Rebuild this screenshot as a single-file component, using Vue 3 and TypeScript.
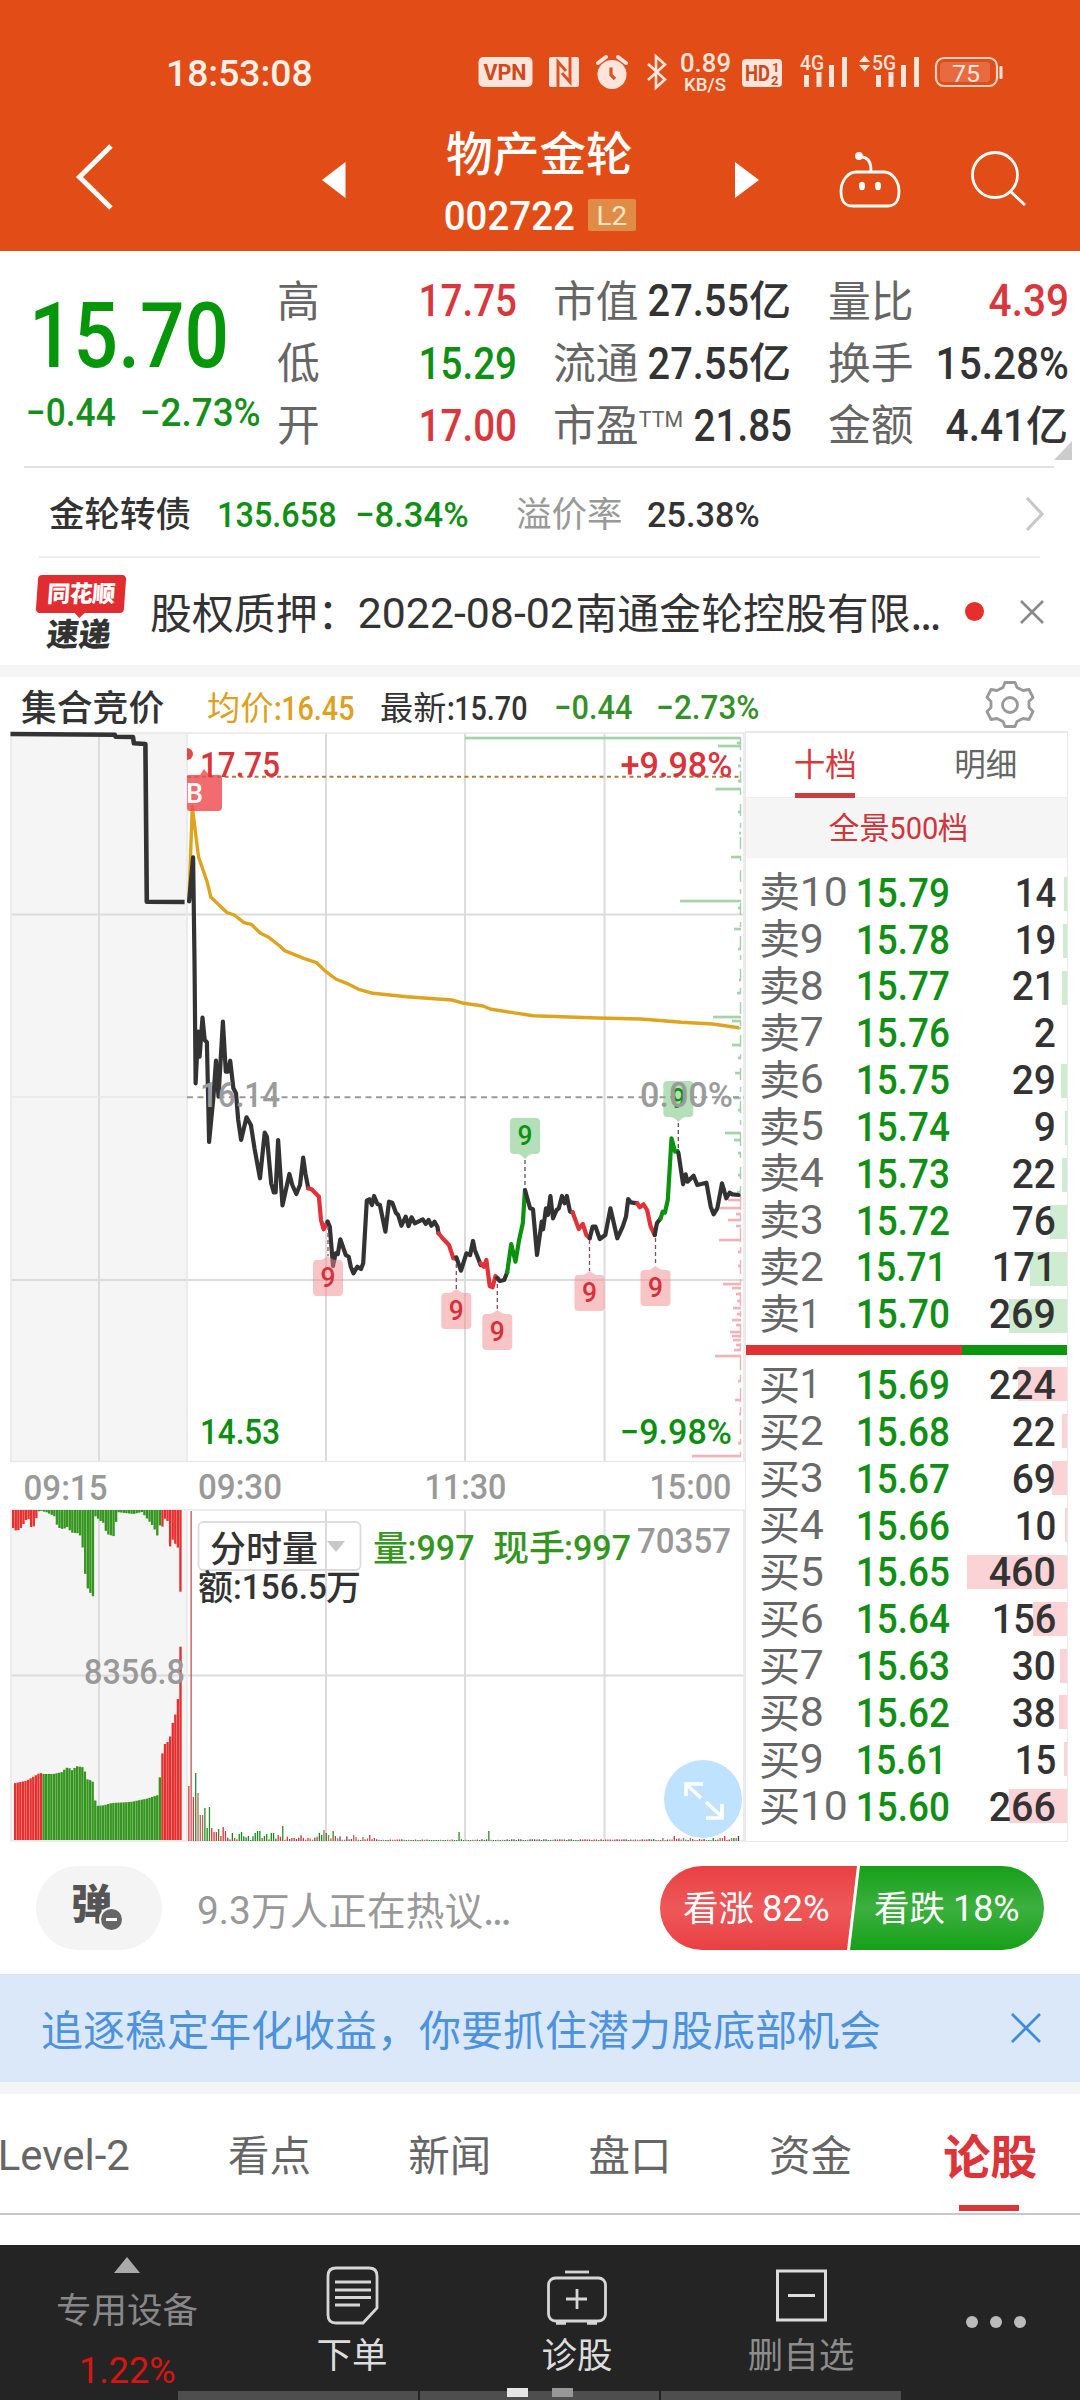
<script setup lang="ts">
import { h } from 'vue'

type Pt = [number, number]

/* Numeric label fitted to a fixed ink width and cap height, like the condensed DIN digits of the app */
interface NumProps { t: string; w: number; cap: number; wt?: number }
const Num = (p: NumProps) => {
  const fs = p.cap / 0.711
  return h('svg', { width: p.w, height: p.cap, style: 'overflow:visible;display:block;flex:none' }, [
    h('text', {
      x: -fs * 0.055, y: p.cap, 'font-size': fs, 'font-weight': p.wt ?? 500,
      textLength: p.w + fs * 0.1, lengthAdjust: 'spacingAndGlyphs', fill: 'currentColor',
      'font-family': 'Roboto, "Liberation Sans", sans-serif',
    }, p.t),
  ])
}
Num.props = ['t', 'w', 'cap', 'wt']

const signalBars = [
  { x: 0, h: 12 }, { x: 12.5, h: 15 }, { x: 25, h: 22 }, { x: 38, h: 30 },
]

const asks = [
  ['10', '15.79', 14], ['9', '15.78', 19], ['8', '15.77', 21], ['7', '15.76', 2], ['6', '15.75', 29],
  ['5', '15.74', 9], ['4', '15.73', 22], ['3', '15.72', 76], ['2', '15.71', 171], ['1', '15.70', 269],
] as [string, string, number][]
const bids = [
  ['1', '15.69', 224], ['2', '15.68', 22], ['3', '15.67', 69], ['4', '15.66', 10], ['5', '15.65', 460],
  ['6', '15.64', 156], ['7', '15.63', 30], ['8', '15.62', 38], ['9', '15.61', 15], ['10', '15.60', 266],
] as [string, string, number][]
const volWidth = (v: number) => [0, 18, 40, 63][String(v).length] - (String(v).startsWith('1') && v > 9 ? 2.5 : 0)
const barWidth = (v: number) => Math.round((v * 100) / 460)

const place = (pts: Pt[], ox: number, oy: number, sx: number, sy: number) =>
  pts.map(([x, y]) => `${(ox + x / sx).toFixed(1)},${(oy + y / sy).toFixed(1)}`).join(' ')
const upper = (p: Pt[]) => place(p, 0, 660, 2.091, 3)
const lower = (p: Pt[]) => place(p, 180, 960, 2.751, 3)

const auction = upper([[22, 222], [240, 224], [242, 230], [278, 231], [280, 250], [304, 252], [307, 725], [386, 726]])
const average = upper([
  [395, 725], [402, 440], [415, 590], [433, 665], [441, 712], [475, 758], [490, 765], [510, 788], [525, 793], [545, 820],
  [560, 830], [585, 858], [595, 872], [635, 895], [662, 908], [680, 933], [702, 957], [725, 970], [750, 988], [780, 1000],
  [850, 1010], [945, 1020], [970, 1030], [1010, 1038], [1027, 1048], [1115, 1067], [1250, 1074], [1340, 1077],
  [1425, 1087], [1490, 1092], [1545, 1103],
])
const K = '#333', R = '#e03238', G = '#0b930f'
const priceRaw: [string, Pt[]][] = [
  [K, [[25, -176], [36, -308], [40, 0], [43, 370], [50, 215], [54, 290], [62, 173], [68, 240], [74, 247], [80, 546], [92, 412], [99, 302],
    [106, 410], [118, 185], [126, 335], [132, 335], [138, 302], [147, 385], [154, 400], [160, 480], [168, 540], [183, 472],
    [195, 495], [205, 565], [220, 655], [233, 518], [239, 530], [251, 670], [258, 697], [263, 697], [270, 540], [282, 736],
    [301, 642], [309, 675], [320, 702], [330, 675], [339, 593], [345, 640], [353, 685]]],
  [R, [[353, 685], [362, 688], [382, 710], [388, 780], [395, 808], [406, 785]]],
  [K, [[406, 785], [412, 800], [421, 918], [428, 880], [434, 882], [441, 838], [456, 885], [464, 890], [470, 920], [477, 940],
    [488, 920], [498, 927], [504, 910], [514, 722], [521, 718], [528, 735], [534, 708], [543, 732], [550, 735], [565, 815],
    [575, 725], [584, 728], [594, 758], [600, 765], [609, 797], [621, 770], [629, 798], [637, 772], [646, 790], [668, 778],
    [676, 792], [684, 780], [692, 797], [700, 785], [708, 800], [711, 820]]],
  [R, [[711, 820], [722, 835], [740, 855], [752, 895], [760, 897]]],
  [K, [[760, 892], [773, 932], [788, 880], [798, 885], [806, 843], [811, 870], [822, 900], [827, 915]]],
  [R, [[827, 910], [836, 920], [843, 900], [852, 978], [860, 982], [868, 948], [875, 955]]],
  [K, [[872, 955], [880, 963], [892, 960], [900, 937]]],
  [G, [[900, 937], [911, 852], [923, 905], [933, 840], [943, 790], [949, 690]]],
  [K, [[949, 690], [963, 745], [971, 748], [982, 885], [995, 785], [999, 808], [1007, 745], [1012, 765], [1019, 708],
    [1026, 775], [1036, 750], [1042, 745], [1051, 708], [1058, 730], [1064, 708], [1073, 755], [1080, 757]]],
  [R, [[1080, 757], [1097, 807], [1108, 792], [1118, 825], [1127, 835]]],
  [K, [[1127, 835], [1135, 800], [1143, 800], [1155, 837], [1170, 825], [1184, 745], [1203, 835], [1218, 800], [1227, 770],
    [1233, 717], [1240, 727], [1258, 730]]],
  [R, [[1258, 730], [1265, 742], [1275, 733], [1285, 750], [1295, 800], [1306, 825]]],
  [K, [[1306, 825], [1312, 790], [1322, 775]]],
  [G, [[1322, 775], [1328, 755], [1334, 758], [1342, 720], [1352, 535], [1362, 575], [1369, 573]]],
  [K, [[1371, 578], [1384, 673], [1391, 643], [1396, 665], [1413, 647], [1423, 675], [1448, 668], [1460, 740], [1468, 763],
    [1478, 745], [1491, 670], [1503, 715], [1512, 698], [1520, 703], [1537, 705]]],
]
const price = priceRaw.map(([c, p]) => ({ c, d: lower(p) }))

/* "9" sequence markers: centre x, box top, y of the price the dashed leader points at */
const buyMarks = [
  { x: 328, y: 1260, from: 1226 }, { x: 456.3, y: 1293, from: 1264 }, { x: 497.3, y: 1314, from: 1284 },
  { x: 589.5, y: 1275, from: 1240 }, { x: 655.5, y: 1270, from: 1238 },
]
const sellMarks = [{ x: 525, y: 1118, to: 1189 }, { x: 678.3, y: 1081, to: 1150 }]

/* price-level distribution along the right edge: y, left x */
const depth: Pt[] = [
  [738, 465], [743, 737], [746, 718], [766, 738], [781, 738], [789, 715.5], [812, 738], [833, 739], [857, 731], [901, 680],
  [908, 738], [929, 734], [949, 738], [980, 739], [993, 737], [1017, 713], [1021, 732], [1028, 737], [1045, 732],
  [1058, 738], [1073, 735], [1098, 734], [1110, 738], [1133, 725], [1140, 734], [1153, 738], [1175, 738], [1192, 737],
  [1200, 728], [1208, 720], [1214, 736], [1220, 728], [1226, 736], [1240, 719], [1252, 738], [1266, 738], [1284, 723],
  [1288, 732], [1294, 736], [1301, 737], [1308, 733], [1314, 737], [1320, 732], [1325, 736], [1332, 730], [1336, 732],
  [1340, 733], [1345, 736], [1350, 734], [1356, 715], [1381, 738], [1400, 735], [1414, 739], [1443, 738], [1456, 692],
]

const sample = (pts: Pt[], x: number) => {
  for (let i = 1; i < pts.length; i++) {
    const [x0, y0] = pts[i - 1]
    const [x1, y1] = pts[i]
    if (x <= x1) return y0 + ((y1 - y0) * (x - x0)) / (x1 - x0 || 1)
  }
  return pts[pts.length - 1][1]
}
const matched: Pt[] = [
  [42, 850], [80, 842], [120, 818], [127, 822], [160, 822], [190, 815], [195, 802], [213, 806], [218, 815], [226, 798],
  [250, 802], [262, 838], [275, 842], [283, 852], [286, 918], [310, 916], [335, 909], [390, 906], [440, 896], [474, 885],
  [477, 832], [482, 832], [484, 772], [493, 733], [508, 722], [516, 672], [524, 656], [531, 598], [536, 596], [539, 440],
]
const unmatched: Pt[] = [
  [36, 76], [42, 92], [58, 90], [70, 72], [84, 50], [90, 82], [104, 78], [112, 36], [120, 32], [140, 37], [165, 50],
  [172, 82], [190, 88], [200, 80], [215, 98], [235, 100], [244, 112], [250, 165], [257, 242], [264, 270], [281, 292],
  [285, 48], [300, 62], [312, 70], [319, 102], [346, 110], [349, 36], [400, 42], [425, 36], [440, 55], [460, 80],
  [472, 108], [480, 72], [487, 80], [494, 56], [502, 60], [508, 145], [517, 118], [532, 142], [536, 145], [540, 275],
]
const auctionBars = Array.from({ length: 65 }, (_, i) => {
  const x = 42 + i * 7.75
  return { x: x / 3, y: 1500 + sample(matched, x + 3) / 3, c: x < 122 || x > 482 ? '#e5302f' : '#35961f' }
})
const auctionTop = Array.from({ length: 66 }, (_, i) => {
  const x = 36 + i * 7.72
  return { x: x / 3, h: (sample(unmatched, x + 3) - 30) / 3, c: x < 112 || x > 482 ? '#e5302f' : '#35961f' }
})

const BR = '#b06a58'
const spikes: Record<number, [number, string]> = {
  0: [55, R], 1: [330, '#c9515a'], 2: [44, R], 3: [68, '#2f8a28'], 4: [48, BR], 5: [26, BR], 6: [26, BR], 7: [33, '#2f8a28'],
  8: [13, G], 9: [34, '#2f8a28'], 10: [13, R], 11: [9, R], 12: [9, R], 13: [12, '#2f8a28'], 14: [5, R], 15: [14, R],
  16: [10, R], 19: [8, G], 22: [7, G], 23: [9, G], 29: [8, G], 30: [10, G], 31: [10, G], 34: [7, G], 36: [8, G], 37: [8, G],
  39: [6, R], 41: [15, '#2f8a28'], 49: [6, R], 57: [8, G], 58: [6, G], 59: [11, BR], 60: [8, G], 61: [6, BR], 63: [10, '#2f8a28'],
  64: [5, R], 72: [6, BR], 79: [6, R], 118: [9, '#2f8a28'], 131: [10, '#2f8a28'], 212: [5, R], 234: [5, R], 240: [5, '#444'],
}
const volumeBars = Array.from({ length: 241 }, (_, i) => {
  const s = spikes[i]
  const n = (i * 37 + ((i * i) % 11) * 5) % 13
  const hgt = s ? s[0] : i < 82 ? 1 + n / 3 : i > 200 ? 1 + (n % 5) / 2 : 1 + (n % 4) / 4
  const c = s ? s[1] : [G, BR, R, '#555'][n % 4]
  return { x: 188.2 + i * 2.29, y: 1841 - hgt, h: hgt, c }
})
const vLines = [99, 326, 465, 604.5]

/* chart lettering: text, x, baseline, width, colour */
const labels: [string, number, number, number, string][] = [
  ['17.75', 200, 776.5, 80, '#d8343a'], ['+9.98%', 620.5, 776.5, 112, '#d8343a'],
  ['16.14', 200, 1106.5, 80, '#9b9b9b'], ['0.00%', 640, 1106.5, 93, '#9b9b9b'],
  ['14.53', 200, 1444, 80, '#0b8f0f'], ['−9.98%', 620, 1444, 112, '#0b8f0f'],
  ['09:15', 23.5, 1499.5, 84, '#999'], ['09:30', 198, 1499, 84, '#999'],
  ['11:30', 424.5, 1499, 82, '#999'], ['15:00', 649.5, 1499, 82, '#999'],
  [':997', 407.5, 1559.5, 67, '#35961f'], [':997', 564, 1559.5, 67, '#35961f'],
  [':156.5', 233, 1598.5, 94, '#333'], ['70357', 637, 1553, 94, '#999'], ['8356.8', 84, 1683.5, 101, '#999'],
]

const tabs = ['看点', '新闻', '盘口', '资金']
</script>

<template>
  <div class="page">
    <header class="top">
      <div class="status">
        <Num class="clock" t="18:53:08" :w="143" :cap="26" />
        <svg class="sys" width="525" height="40" viewBox="478 53 525 40">
          <g fill="#fde5dc">
            <rect x="478.500" y="57" width="54" height="30" rx="5" />
            <rect x="549" y="57" width="30" height="30" rx="2" />
            <circle cx="612" cy="74.500" r="14.500" />
            <path d="M598 63l8-6M626 63l-8-6" stroke="#fde5dc" stroke-width="4" stroke-linecap="round" />
            <rect x="742" y="59" width="40" height="28" rx="4" />
            <path d="M859 62h11l-5.500-6.500zM859 65h11l-5.500 6.500z" />
          </g>
          <path d="M558 87v-25l8 9M570 57v25l-8-9" fill="none" stroke="#dd5225" stroke-width="3" />
          <path d="M611 67.500v7.500l4 4" fill="none" stroke="#dd5225" stroke-width="3.200" />
          <path d="M648 64l17 15.500-9 8v-31l9 8L648 80" fill="none" stroke="#fde5dc" stroke-width="2.600" />
          <g class="st">
            <text x="483.500" y="80" font-size="22.500" font-weight="700" textLength="43" lengthAdjust="spacingAndGlyphs" fill="#d0481a">VPN</text>
            <text x="680" y="72" font-size="25" font-weight="500" textLength="51" lengthAdjust="spacingAndGlyphs">0.89</text>
            <text x="684" y="90.500" font-size="19" font-weight="500" textLength="42" lengthAdjust="spacingAndGlyphs">KB/S</text>
            <text x="745" y="81" font-size="22" font-weight="700" textLength="25" lengthAdjust="spacingAndGlyphs" fill="#d0481a">HD</text>
            <text x="772" y="72" font-size="13" font-weight="700" fill="#d0481a">1</text>
            <text x="771" y="84.500" font-size="13" font-weight="700" fill="#d0481a">2</text>
            <text x="800" y="70" font-size="20.500" font-weight="500" textLength="24" lengthAdjust="spacingAndGlyphs">4G</text>
            <text x="872" y="70" font-size="20.500" font-weight="500" textLength="24" lengthAdjust="spacingAndGlyphs">5G</text>
          </g>
          <g fill="#fde5dc">
            <rect v-for="b in signalBars" :key="b.x" :x="804 + b.x" :y="87 - b.h" width="5" :height="b.h" />
            <rect v-for="b in signalBars" :key="'b' + b.x" :x="876 + b.x" :y="87 - b.h" width="5" :height="b.h" />
            <rect x="999.500" y="66" width="3" height="13" rx="1" />
          </g>
          <rect x="936" y="58" width="61" height="28" rx="8" fill="none" stroke="#fbd3c4" stroke-width="2.200" />
          <rect x="940" y="62" width="50" height="20" rx="4" fill="#e76a40" />
          <text class="st75" x="952" y="81.500" font-size="24" textLength="28" lengthAdjust="spacingAndGlyphs">75</text>
        </svg>
      </div>
      <div class="titlebar">
        <svg class="back" width="40" height="68" viewBox="0 0 40 68"><path d="M36 3L4.500 34l31.500 31" fill="none" stroke="#fff" stroke-width="5" /></svg>
        <svg class="prev" width="24" height="36" viewBox="0 0 24 36"><path d="M23.500 0v36L0 18z" fill="#fff" /></svg>
        <div class="title">
          <h1 class="cn">物产金轮</h1>
          <div class="code"><Num t="002722" :w="127" :cap="29" /><span class="l2"><Num t="L2" :w="28" :cap="18.5" :wt="400" /></span></div>
        </div>
        <svg class="next" width="24" height="36" viewBox="0 0 24 36"><path d="M0 0v36l24-18z" fill="#fff" /></svg>
        <svg class="bot" width="64" height="60" viewBox="838 150 64 60" fill="none" stroke="#fff" stroke-width="2.800">
          <path d="M871 171c0-9-3-14-10-14" /><circle cx="859" cy="156" r="2.500" fill="#fff" />
          <path d="M856 172h28c8 0 15 9 15 19 0 11-4 15-12 15h-34c-8 0-12-4-12-15 0-10 7-19 15-19z" />
          <ellipse cx="862" cy="186" rx="2" ry="3.200" fill="#fff" stroke-width="2" /><ellipse cx="878" cy="186" rx="2" ry="3.200" fill="#fff" stroke-width="2" />
        </svg>
        <svg class="search" width="60" height="60" viewBox="969 149 60 60" fill="none" stroke="#fff" stroke-width="2.800"><circle cx="995" cy="175" r="22.500" /><path d="M1010 191l15 14" /></svg>
      </div>
    </header>

    <section class="quote">
      <div class="last">
        <Num class="big" t="15.70" :w="191" :cap="64" />
        <div class="chg"><Num t="−0.44" :w="86" :cap="27.5" /><Num t="−2.73%" :w="117" :cap="27.5" /></div>
      </div>
      <dl class="c1">
        <div><dt class="cn">高</dt><dd class="r"><Num t="17.75" :w="94" :cap="31.5" /></dd></div>
        <div><dt class="cn">低</dt><dd class="g"><Num t="15.29" :w="94" :cap="31.5" /></dd></div>
        <div><dt class="cn">开</dt><dd class="r"><Num t="17.00" :w="94" :cap="31.5" /></dd></div>
      </dl>
      <dl class="c2">
        <div><dt class="cn">市值</dt><dd><Num t="27.55" :w="97" :cap="31.5" /><b class="cn">亿</b></dd></div>
        <div><dt class="cn">流通</dt><dd><Num t="27.55" :w="97" :cap="31.5" /><b class="cn">亿</b></dd></div>
        <div><dt class="cn">市盈<Num class="ttm" t="TTM" :w="42" :cap="16" :wt="400" /></dt><dd><Num t="21.85" :w="94" :cap="31.5" /></dd></div>
      </dl>
      <dl class="c3">
        <div><dt class="cn">量比</dt><dd class="r"><Num t="4.39" :w="76" :cap="31.5" /></dd></div>
        <div><dt class="cn">换手</dt><dd><Num t="15.28%" :w="129" :cap="31.5" /></dd></div>
        <div><dt class="cn">金额</dt><dd><Num t="4.41" :w="76" :cap="31.5" /><b class="cn">亿</b></dd></div>
      </dl>
      <i class="corner"></i>
    </section>

    <section class="bond">
      <span class="cn name">金轮转债</span>
      <Num class="g b1" t="135.658" :w="116" :cap="25.5" />
      <Num class="g b2" t="−8.34%" :w="110" :cap="25.5" />
      <span class="cn prem">溢价率</span>
      <Num t="25.38%" :w="109" :cap="25.5" />
      <svg class="chev" width="20" height="36" viewBox="0 0 20 36"><path d="M2 2l15 16L2 34" fill="none" stroke="#c8c8c8" stroke-width="3.200" /></svg>
    </section>

    <section class="news">
      <div class="logo"><span class="bubble cn"><em>同花顺</em></span><span class="express cn">速递</span></div>
      <p class="cn">股权质押：<Num class="date" t="2022-08-02" :w="212" :cap="30" :wt="400" />南通金轮控股有限<span class="dots">...</span></p>
      <i class="dot"></i>
      <svg class="close" width="24" height="24" viewBox="0 0 24 24"><path d="M1 1l22 22M23 1L1 23" stroke="#888" stroke-width="2.500" /></svg>
    </section>

    <section class="market">
      <div class="legend">
        <span class="cn n">集合竞价</span>
        <span class="cn avg">均价:<Num t="16.45" :w="70" :cap="23.5" /></span>
        <span class="cn new">最新:<Num t="15.70" :w="70" :cap="23.5" /></span>
        <Num class="lg l1" t="−0.44" :w="75" :cap="23.5" />
        <Num class="lg l2n" t="−2.73%" :w="100" :cap="23.5" />
        <svg class="gear" width="50" height="50" viewBox="-25 -25 50 50" fill="none" stroke="#999" stroke-width="2.800" stroke-linejoin="round">
          <path d="M-5-21h10l2 5 6 3 6-1 4 8-4 4v6l4 4-4 8-6-1-6 3-2 5h-10l-2-5-6-3-6 1-4-8 4-4v-6l-4-4 4-8 6 1 6-3z" transform="translate(0 -1.500)" />
          <circle r="7.500" />
        </svg>
      </div>
      <div class="board">
        <svg class="chart" width="745" height="1112" viewBox="0 731 745 1112">
          <rect x="11" y="733" width="176" height="728" fill="#f5f5f5" />
          <rect x="11" y="1510" width="176" height="331" fill="#f5f5f5" />
          <g stroke="#dcdcdc" stroke-width="2">
            <template v-for="x in vLines" :key="x"><path :d="`M${x} 733v728M${x} 1510v331`" /></template>
            <path d="M11 914.500H744M11 1280H744M11 1675.500H744" />
          </g>
          <g stroke="#e9e9e9" stroke-width="1.700" fill="none">
            <path d="M11 733H744V1461.500H11zM11 1510H744V1841H11zM187 733v728M187 1510v331M11 1097H187" />
          </g>
          <rect v-for="(d, i) in depth" :key="'d' + i" :x="d[1]" :y="d[0] - 1.300" :width="741 - d[1]" height="2.700" :fill="d[0] < 1196 ? '#a5d2a8' : '#f0b3b8'" />
          <path d="M740.500 738V1196" stroke="#a5d2a8" stroke-width="1.500" stroke-dasharray="12 7 5 9" />
          <path d="M740.500 1196V1456" stroke="#f0b3b8" stroke-width="1.500" stroke-dasharray="14 5 6 7" />
          <path d="M187 776.800H741" stroke="#b5793c" stroke-width="2" stroke-dasharray="4 3.500" />
          <path d="M187 1097.300H744" stroke="#999" stroke-width="2" stroke-dasharray="6 4.500" />
          <polyline :points="auction" fill="none" stroke="#333" stroke-width="4.600" stroke-linejoin="round" />
          <polyline :points="average" fill="none" stroke="#dfa41f" stroke-width="3.400" stroke-linejoin="round" />
          <polyline v-for="(s, i) in price" :key="'p' + i" :points="s.d" fill="none" :stroke="s.c" stroke-width="4.200" stroke-linejoin="round" stroke-linecap="round" />

          <path d="M187 748a6 6 0 0 1 6 6a6 6 0 0 1-6 6z" fill="#e04a4c" />
          <path d="M187 776q0-1 2-1h11l4-6 5 6h10q3 0 3 3v29q0 4-4 4h-28q-3 0-3-3z" fill="#ee4a4f" fill-opacity=".82" />
          <text x="186" y="802.500" font-size="28" font-weight="500" fill="#fff" font-family="Roboto, sans-serif" textLength="17" lengthAdjust="spacingAndGlyphs">B</text>

          <g v-for="m in buyMarks" :key="'b' + m.x">
            <path :d="`M${m.x} ${m.from}V${m.y - 4}`" stroke="#8a4a5c" stroke-width="1.300" stroke-dasharray="4 3" />
            <path :d="`M${m.x - 15} ${m.y + 4}q0-4 4-4h3q3 0 5-2l3-2 3 2q2 2 5 2h3q4 0 4 4v28q0 4-4 4h-22q-4 0-4-4z`" fill="#f28a8e" fill-opacity=".5" />
            <text class="d nine" :x="m.x - 7.500" :y="m.y + 27" textLength="15" lengthAdjust="spacingAndGlyphs" fill="#d6303a">9</text>
          </g>
          <g v-for="m in sellMarks" :key="'s' + m.x">
            <path :d="`M${m.x} ${m.y + 42}V${m.to}`" stroke="#555" stroke-width="1.300" stroke-dasharray="4 3" />
            <path :d="`M${m.x - 15} ${m.y + 4}q0-4 4-4h22q4 0 4 4v28q0 4-4 4h-3q-3 0-5 2l-3 3-3-3q-2-2-5-2h-3q-4 0-4-4z`" fill="#6cc072" fill-opacity=".5" />
            <text class="d nine" :x="m.x - 7.500" :y="m.y + 26.500" textLength="15" lengthAdjust="spacingAndGlyphs" fill="#0b930f">9</text>
          </g>

          <rect v-for="b in auctionTop" :key="'t' + b.x" :x="b.x" y="1510" width="2.350" :height="b.h" :fill="b.c" />
          <rect v-for="b in auctionBars" :key="'a' + b.x" :x="b.x" :y="b.y" width="2.350" :height="1840 - b.y" :fill="b.c" />
          <rect v-for="b in volumeBars" :key="'v' + b.x" :x="b.x" :y="b.y" width="1.300" :height="b.h" :fill="b.c" />

          <rect x="198.500" y="1522" width="162" height="48" rx="5" fill="#fff" stroke="#ddd" stroke-width="1.800" />
          <path d="M326 1523v46" stroke="#dcdcdc" stroke-width="2" />
          <path d="M327 1541h18l-9 11z" fill="#c8c8c8" />
          <g class="z">
            <text x="210" y="1561.500" font-size="36" fill="#333">分时量</text>
            <g fill="#35961f"><text x="373" y="1561" font-size="35">量</text><text x="493" y="1561" font-size="36">现手</text></g>
            <g fill="#333"><text x="198" y="1600" font-size="35">额</text><text x="326" y="1600" font-size="35">万</text></g>
          </g>
          <g class="d" font-size="35">
            <text v-for="l in labels" :key="l[0] + l[1]" :x="l[1]" :y="l[2]" :textLength="l[3]" lengthAdjust="spacingAndGlyphs" :fill="l[4]">{{ l[0] }}</text>
          </g>
          <circle cx="703" cy="1799" r="39" fill="#b9e0ff" fill-opacity=".93" />
          <path d="M686 1796v-12h17M686 1784l15 14M706 1802l16 15M722 1804v14h-16" fill="none" stroke="#fff" stroke-width="3.600" />
        </svg>

        <aside class="book">
          <nav class="btabs"><span class="cn on">十档</span><span class="cn">明细</span></nav>
          <div class="pano cn">全景<Num class="n500" t="500" :w="46" :cap="22" :wt="400" />档</div>
          <ul class="asks">
            <li v-for="a in asks" :key="a[1]">
              <i :style="{ width: barWidth(a[2]) + 'px' }"></i>
              <span class="cn">卖</span><Num class="lv" :t="a[0]" :w="a[0].length > 1 ? 44 : a[0] === '1' ? 17 : 20" :cap="29" :wt="400" />
              <Num class="pr" :t="a[1]" :w="a[1].endsWith('1') ? 87 : 90" :cap="29.5" />
              <Num class="vo" :t="String(a[2])" :w="volWidth(a[2])" :cap="29.5" />
            </li>
          </ul>
          <div class="ratio"></div>
          <ul class="bids">
            <li v-for="a in bids" :key="a[1]">
              <i :style="{ width: barWidth(a[2]) + 'px' }"></i>
              <span class="cn">买</span><Num class="lv" :t="a[0]" :w="a[0].length > 1 ? 44 : a[0] === '1' ? 17 : 20" :cap="29" :wt="400" />
              <Num class="pr" :t="a[1]" :w="a[1].endsWith('1') ? 87 : 90" :cap="29.5" />
              <Num class="vo" :t="String(a[2])" :w="volWidth(a[2])" :cap="29.5" />
            </li>
          </ul>
        </aside>
      </div>
    </section>

    <section class="chat">
      <div class="danmu"><span class="cn">弹</span><i></i></div>
      <div class="cn talk"><Num t="9.3" :w="50" :cap="27.5" :wt="400" /><span>万人正在热议<span class="dots">...</span></span></div>
      <div class="vote">
        <div class="bull"><span class="cn">看涨</span><Num t="82%" :w="64" :cap="26" :wt="400" /></div>
        <div class="bear"><span class="cn">看跌</span><Num t="18%" :w="63" :cap="26" :wt="400" /></div>
      </div>
    </section>

    <section class="banner">
      <span class="cn">追逐稳定年化收益，你要抓住潜力股底部机会</span>
      <svg width="30" height="30" viewBox="0 0 30 30"><path d="M1 1l28 28M29 1L1 29" stroke="#3f8be0" stroke-width="2.800" /></svg>
    </section>

    <nav class="tabs">
      <Num class="lvl" t="Level-2" :w="128" :cap="30" :wt="400" />
      <span v-for="t in tabs" :key="t" class="cn">{{ t }}</span>
      <span class="cn act">论股</span>
    </nav>

    <footer class="nav">
      <div class="sector">
        <svg width="26" height="16" viewBox="0 0 26 16"><path d="M13 0l13 16H0z" fill="#aaa" /></svg>
        <span class="cn">专用设备</span>
        <Num class="pct" t="1.22%" :w="93" :cap="26" :wt="400" />
      </div>
      <div class="item i1">
        <svg width="60" height="60" viewBox="321 2265 60 60" fill="none" stroke="#d6d6d6" stroke-width="2.800">
          <path d="M335 2268h33q8 0 8 8v32l-14 15h-27q-8 0-8-8v-39q0-8 8-8z" />
          <path d="M334 2282h36M334 2290h36M334 2297.500h36M334 2305h25" />
        </svg>
        <span class="cn">下单</span>
      </div>
      <div class="item i2">
        <svg width="64" height="60" viewBox="545 2265 64 60" fill="none" stroke="#d6d6d6" stroke-width="2.800">
          <path d="M565 2272h24" /><rect x="548.500" y="2278" width="57" height="43" rx="7" />
          <path d="M577 2289v20M566 2299h21" /><path d="M556 2323h10M587 2323h10" stroke-width="3.500" />
        </svg>
        <span class="cn">诊股</span>
      </div>
      <div class="item i3">
        <svg width="60" height="60" viewBox="771 2265 60 60" fill="none" stroke="#dcdcdc" stroke-width="3"><rect x="777.500" y="2271" width="48" height="49" /><path d="M788 2295.500h27" /></svg>
        <span class="cn">删自选</span>
      </div>
      <div class="more"><i></i><i></i><i></i></div>
      <div class="home"><b></b><b></b><b></b><u></u><u class="dim"></u></div>
    </footer>
  </div>
</template>

<style>
body { margin: 0; background: #fff; }
</style>

<style scoped>
* { box-sizing: border-box; }
.page { width: 1080px; height: 2400px; overflow: hidden; background: #fff; color: #333; font-family: "Noto Sans CJK SC", sans-serif; display: flex; flex-direction: column; }
.page > * { flex: none; }
h1, p, dl, dd, ul, li { margin: 0; padding: 0; list-style: none; }
.cn { font-family: "Noto Sans CJK SC", sans-serif; line-height: 1; white-space: nowrap; }
.r { color: #d8383d; }
.g { color: #0f8f14; }

.top { height: 251px; background: #e24d17; color: #fff; }
.status { height: 93px; padding: 53px 77px 0 168px; display: flex; justify-content: space-between; }
.clock { margin-top: 7px; color: #fff0ea; }
.sys { display: block; overflow: visible; }
.st text { font-family: Roboto, sans-serif; }
.st { fill: #fde5dc; }
.st75 { font-family: Roboto, sans-serif; fill: #fde5dc; }
.titlebar { display: flex; height: 158px; padding-left: 75px; align-items: flex-start; }
.back { margin-top: 50px; }
.prev { margin: 69px 0 0 207px; }
.title { margin: 28px 0 0 100px; width: 190px; }
h1 { font-size: 46.700px; font-weight: 500; height: 70px; line-height: 60px !important; }
.code { display: flex; align-items: center; margin-top: 8px; height: 32px; }
.l2 { margin-left: 15px; width: 48px; height: 32px; display: flex; align-items: center; justify-content: center; background: #e08c47; border-radius: 2px; color: #ffe9c8; }
.next { margin: 69px 0 0 99px; }
.bot { margin: 57px 0 0 79px; }
.search { margin: 56px 0 0 67px; }

.quote { position: relative; height: 217px; padding-top: 18px; display: flex; }
.quote::after { content: ''; position: absolute; left: 24px; right: 26px; bottom: 0; height: 2px; background: #e2e2e2; }
.last { width: 277px; padding: 34px 0 0 28px; color: #06960a; }
.big { margin-left: 6px; }
.chg { display: flex; gap: 28px; margin-top: 31px; color: #14901a; }
dl > div { display: flex; height: 62.300px; align-items: center; justify-content: space-between; }
dt { font-size: 42.800px; color: #666; display: flex; align-items: center; padding-bottom: 4px; }
dd { display: flex; align-items: center; }
dd b { font-size: 42px; font-weight: 500; margin: 0 -1px 4px 2px; }
.c1 { width: 238px; }
.c2 { width: 237px; margin-left: 38px; }
.c3 { width: 239px; margin-left: 38px; }
.ttm { margin: -8px 0 0 1px; }
.corner { position: absolute; right: 8px; bottom: 8px; border-left: 18px solid transparent; border-bottom: 19px solid #ccc; }

.bond { height: 90px; margin: 0 40px 0 39px; border-bottom: 2px solid #eee; display: flex; align-items: center; padding: 4px 0 0 10px; }
.name { font-size: 35.500px; font-weight: 500; padding-bottom: 4px; }
.b1 { margin-left: 28px; }
.b2 { margin-left: 22px; }
.prem { font-size: 35.500px; color: #999; margin: 0 26px 0 49px; padding-bottom: 4px; }
.chev { margin-left: auto; margin-right: -5px; }

.news { height: 119px; padding-left: 37px; display: flex; align-items: center; border-bottom: 12px solid #f5f5f5; }
.logo { width: 88px; display: flex; flex-direction: column; gap: 7px; }
.bubble { position: relative; height: 38px; background: #e12c30; color: #fff; transform: skewX(-4deg); border-radius: 4px; text-align: center; }
.bubble::after { content: ''; position: absolute; left: 38px; top: 37px; border: 6px solid transparent; border-top-color: #e12c30; }
.bubble em { font-size: 23px; font-weight: 900; font-style: normal; line-height: 35px; letter-spacing: -.5px; }
.express { font-size: 32px; font-weight: 900; transform: skewX(-6deg); padding-left: 10px; height: 28px; line-height: 24px; }
.news p { font-size: 41.900px; display: flex; align-items: center; margin-left: 25px; padding-bottom: 1px; }
.date { margin: 3px 3px 0 1px; }
.dots { letter-spacing: -2px; }
.dot { width: 19px; height: 19px; border-radius: 50%; background: #e62e2c; margin-left: auto; margin-right: 36px; }
.close { margin-right: 36px; }

.legend { height: 54px; display: flex; align-items: center; padding: 6px 0 0 21px; }
.legend .n { font-size: 35.800px; font-weight: 500; width: 186px; padding-bottom: 3px; }
.avg, .new { display: flex; align-items: center; font-size: 33.200px; width: 173px; padding-bottom: 3px; }
.avg svg, .new svg { margin-top: 4px; margin-left: 0; }
.avg { color: #dfa01f; }
.lg { color: #35902a; }
.l1 { margin-left: 3px; }
.l2n { margin-left: 27px; }
.gear { margin-left: 227px; margin-top: -5px; }
.board { display: flex; height: 1112px; }
.chart { flex: none; display: block; }
.d text, text.d { font-family: Roboto, sans-serif; font-weight: 500; }
.nine { font-size: 28px; }
.z text { font-family: "Noto Sans CJK SC", sans-serif; font-weight: 500; }

.book { width: 323px; border: 1px solid #e9e9e9; border-top-width: 2px; height: 1111px; }
.btabs { height: 65px; display: flex; border-bottom: 1px solid #eee; }
.btabs span { flex: 1; text-align: center; font-size: 31.500px; line-height: 58px; color: #666; position: relative; left: -1px; }
.btabs .on { color: #d8383d; }
.on::after { content: ''; position: absolute; left: 50px; width: 60px; bottom: -1px; height: 5px; background: #c83f42; }
.pano { height: 60px; background: #f5f5f5; display: flex; align-items: center; justify-content: center; font-size: 30.500px; color: #d0353c; padding-right: 16px; padding-bottom: 3px; }
.n500 { margin: 3px 1px 0; }
.asks { padding-top: 10px; }
li { height: 46.850px; display: flex; align-items: center; position: relative; padding-left: 13px; }
li i { position: absolute; right: 0; top: 9px; height: 34px; background: #cfebd0; }
.bids i { background: #fbd2d6; top: 7px; }
li .cn { font-size: 41px; color: #666; padding-bottom: 3px; }
.lv { color: #6a6a6a; margin-left: 2px; }
.pr { position: absolute; left: 112px; color: #0f8f14; }
.vo { position: absolute; right: 13px; }
.ratio { height: 10px; margin-top: 9px; background: linear-gradient(90deg, #e03232 0 216px, #0b960f 216px); }
.bids { padding-top: 5px; }

.chat { height: 131px; padding: 23px 36px 0 36px; display: flex; }
.danmu { width: 126px; height: 84px; border-radius: 42px; background: #f4f4f4; position: relative; padding: 15px 0 0 35px; font-size: 41px; color: #555; }
.danmu .cn { font-weight: 900; display: block; }
.danmu i { position: absolute; left: 65px; top: 43px; width: 21px; height: 21px; border-radius: 50%; background: #666; box-shadow: 0 0 0 2px #f4f4f4; }
.danmu i::after { content: ''; position: absolute; left: 5px; top: 9px; width: 11px; height: 3px; background: #fff; }
.talk { display: flex; align-items: center; margin-left: 37px; height: 84px; font-size: 38.700px; color: #999; }
.talk svg { margin-top: 4px; margin-right: 2px; }
.vote { margin-left: auto; width: 384px; height: 84px; display: flex; border-radius: 42px; overflow: hidden; color: #fff; position: relative; }
.vote > div { display: flex; align-items: center; font-size: 35.500px; }
.vote .cn { padding-bottom: 4px; margin-right: 10px; }
.bull { width: 197px; padding-left: 23px; background: linear-gradient(#e94042, #ee5859 50%, #e94042); clip-path: polygon(0 0, 100% 0, 187px 100%, 0 100%); }
.bear { width: 197px; margin-left: -10px; padding-left: 27px; background: linear-gradient(#16a018, #3cb03f 50%, #16a018); clip-path: polygon(13px 0, 100% 0, 100% 100%, 3px 100%); }

.banner { height: 120px; background: #dae8fa; border-bottom: 12px solid #f4f6f5; display: flex; align-items: center; justify-content: space-between; padding: 0 39px 0 41px; }
.banner .cn { font-size: 42px; color: #4c92dd; padding-bottom: 1px; }

.tabs { height: 121px; border-bottom: 2px solid #c8c8c8; display: flex; align-items: center; color: #666; padding-top: 2px; }
.lvl { margin-right: 100px; }
.tabs .cn { font-size: 41.500px; width: 180.300px; padding-bottom: 2px; }
.tabs .act { width: 96px; font-size: 47px; font-weight: 700; color: #dc3439; position: relative; margin-left: -6px; }
.act::after { content: ''; position: absolute; left: 16px; top: 75px; width: 60px; height: 6px; background: #dc3439; }

.nav { position: relative; height: 155px; margin-top: 30px; background: #242424; display: flex; }
.sector { width: 254px; height: 155px; display: flex; flex-direction: column; align-items: center; padding-top: 12px; color: #88888a; font-size: 35.500px; }
.sector .cn { margin-top: 17px; }
.sector svg { display: block; }
.pct { color: #d8150f; margin-top: 31px; }
.item { display: flex; flex-direction: column; align-items: center; width: 120px; padding-top: 20px; font-size: 35.500px; color: #ddd; }
.item .cn { margin-top: 10px; }
.i1 { margin-left: 38px; }
.i2 { margin-left: 105px; }
.i3 { margin-left: 104px; color: #8c8c8c; }
.more { display: flex; gap: 12px; margin: 71px 0 0 105px; }
.more i { width: 12px; height: 12px; border-radius: 50%; background: #bbb; }
.home { position: absolute; left: 178px; bottom: 0; width: 723px; height: 9px; display: flex; gap: 2px; }
.home b { flex: 1; background: #4e4e4e; }
.home u { position: absolute; left: 329px; top: -3px; width: 21px; height: 9px; background: #e6e6e6; }
.home .dim { left: 374px; background: #979797; }
</style>
